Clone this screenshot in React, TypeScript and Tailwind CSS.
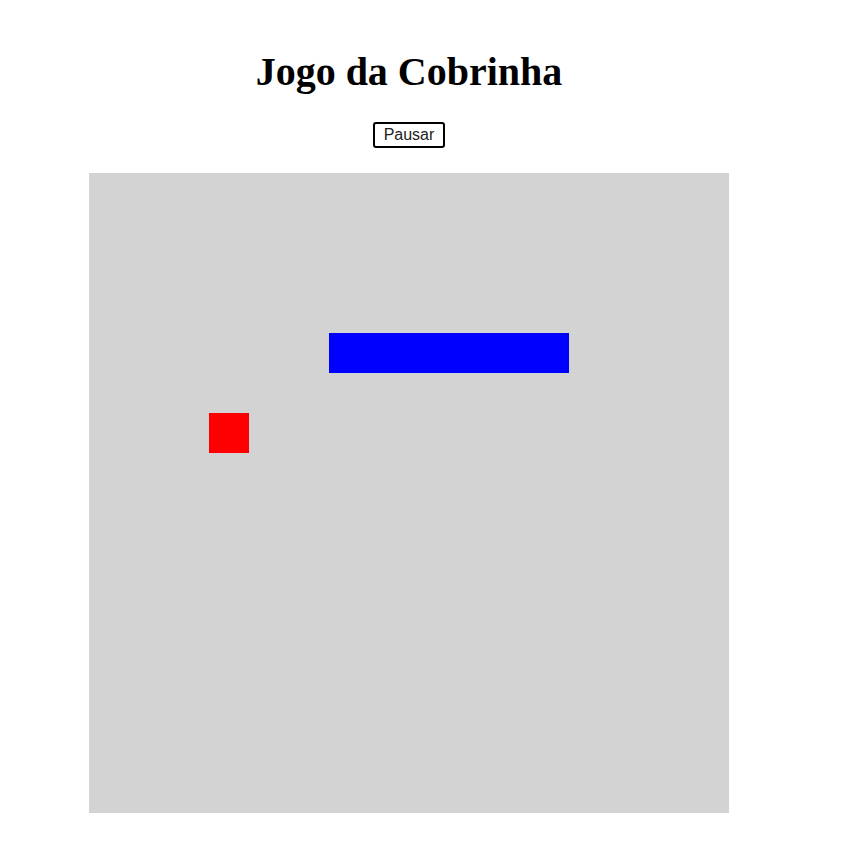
const CELL = 40;

const snake = [
  { x: 6, y: 4 },
  { x: 7, y: 4 },
  { x: 8, y: 4 },
  { x: 9, y: 4 },
  { x: 10, y: 4 },
  { x: 11, y: 4 },
];

const food = { x: 3, y: 6 };

export default function App() {
  return (
    <div className="w-[818px] flex flex-col items-center bg-white pb-11">
      <h1 className="mt-[49px] text-[40px] leading-[46px] font-bold text-black font-['Liberation_Serif',serif]">
        Jogo da Cobrinha
      </h1>

      <button className="mt-[27px] w-[72px] h-[26px] border-2 border-black rounded-[3px] bg-white text-[16px] leading-none text-[#222] font-['Liberation_Sans',Arial,sans-serif]">
        Pausar
      </button>

      <div className="relative mt-[25px] w-[640px] h-[640px] bg-[#d3d3d3]">
        {snake.map((s, i) => (
          <div
            key={i}
            className="absolute bg-[#0000ff]"
            style={{ left: s.x * CELL, top: s.y * CELL, width: CELL, height: CELL }}
          />
        ))}
        <div
          className="absolute bg-[#ff0000]"
          style={{ left: food.x * CELL, top: food.y * CELL, width: CELL, height: CELL }}
        />
      </div>
    </div>
  );
}
